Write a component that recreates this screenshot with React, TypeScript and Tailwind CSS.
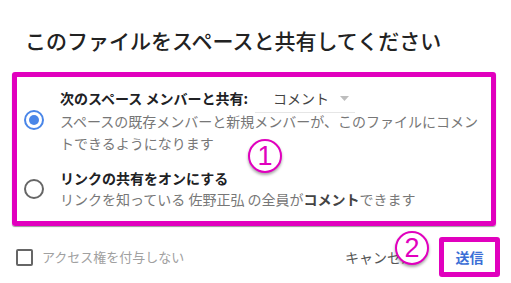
import React from "react";

const F = { fontFamily: '"Noto Sans CJK JP", "Noto Sans", sans-serif' };

function Circled({ n, className }: { n: string; className: string }) {
  return (
    <div
      className={`absolute w-[34px] h-[34px] rounded-full bg-white border-2 border-[#e100be] shadow-[0_2px_3px_rgba(0,0,0,0.35)] flex items-center justify-center text-[#e100be] text-[27px] leading-none ${className}`}
      style={{ fontFamily: '"Liberation Sans", sans-serif' }}
    >
      {n}
    </div>
  );
}

export default function App() {
  return (
    <div
      className="relative w-[511px] h-[283px] bg-white overflow-hidden text-[#202124]"
      style={F}
    >
      <div className="pl-[25px] pt-[25px] text-[21px] leading-[30px] font-medium text-[#222]">
        このファイルをスペースと共有してください
      </div>

      <div className="mt-[17px] ml-[12px] w-[484px] h-[154px] border-[5px] border-[#e100be] rounded-[3px] shadow-[0_1px_1px_rgba(0,0,0,0.4)] pt-[9px]">
        <div className="flex items-center">
          <div className="ml-[7px] w-[20px] h-[20px] rounded-full border-2 border-[#4a86e8] flex items-center justify-center shrink-0">
            <div className="w-[10px] h-[10px] rounded-full bg-[#4a86e8]" />
          </div>
          <div className="ml-[16px]">
            <div className="flex items-center h-[24px] text-[14px]">
              <span className="font-bold text-[#202124]">次のスペース メンバーと共有:</span>
              <div className="relative ml-[7px] w-[100px] h-[24px] flex items-center pl-[18px] text-[#444]">
                <span>コメント</span>
                <svg width="9" height="5" viewBox="0 0 9 5" className="ml-[11px]">
                  <path d="M0 0h9L4.5 5z" fill="#bdbdbd" />
                </svg>
                <span className="absolute left-0 right-0 bottom-[-3px] h-px bg-[#e6e6e6]" />
              </div>
            </div>
            <div className="text-[14px] leading-[22px] text-[#777] whitespace-nowrap">
              <div>スペースの既存メンバーと新規メンバーが、このファイルにコメン</div>
              <div>トできるようになります</div>
            </div>
          </div>
        </div>

        <div className="flex items-center mt-[14px]">
          <div className="ml-[7px] w-[20px] h-[20px] rounded-full border-2 border-[#666] shrink-0" />
          <div className="ml-[16px] text-[14px] leading-[21px]">
            <div className="font-bold text-[#202124]">リンクの共有をオンにする</div>
            <div className="text-[#777]">
              リンクを知っている 佐野正弘 の全員が<span className="font-bold text-[#444]">コメント</span>できます
            </div>
          </div>
        </div>
      </div>

      <div className="mt-[11px] h-[40px] flex items-center pl-[16px] pr-[11px]">
        <div className="w-[17px] h-[17px] border-2 border-[#666] rounded-[2px]" />
        <span className="ml-[9px] text-[13px] text-[#a0a0a0]">アクセス権を付与しない</span>
        <span className="ml-auto text-[14px] text-[#555]">キャンセル</span>
        <div className="ml-[24px] w-[61px] h-[40px] border-[5px] border-[#e100be] rounded-[3px] flex items-center justify-center text-[14px] font-bold text-[#3b6fd6]">
          送信
        </div>
      </div>

      <Circled n="1" className="left-[248px] top-[139px]" />
      <Circled n="2" className="left-[395px] top-[231px]" />
    </div>
  );
}
